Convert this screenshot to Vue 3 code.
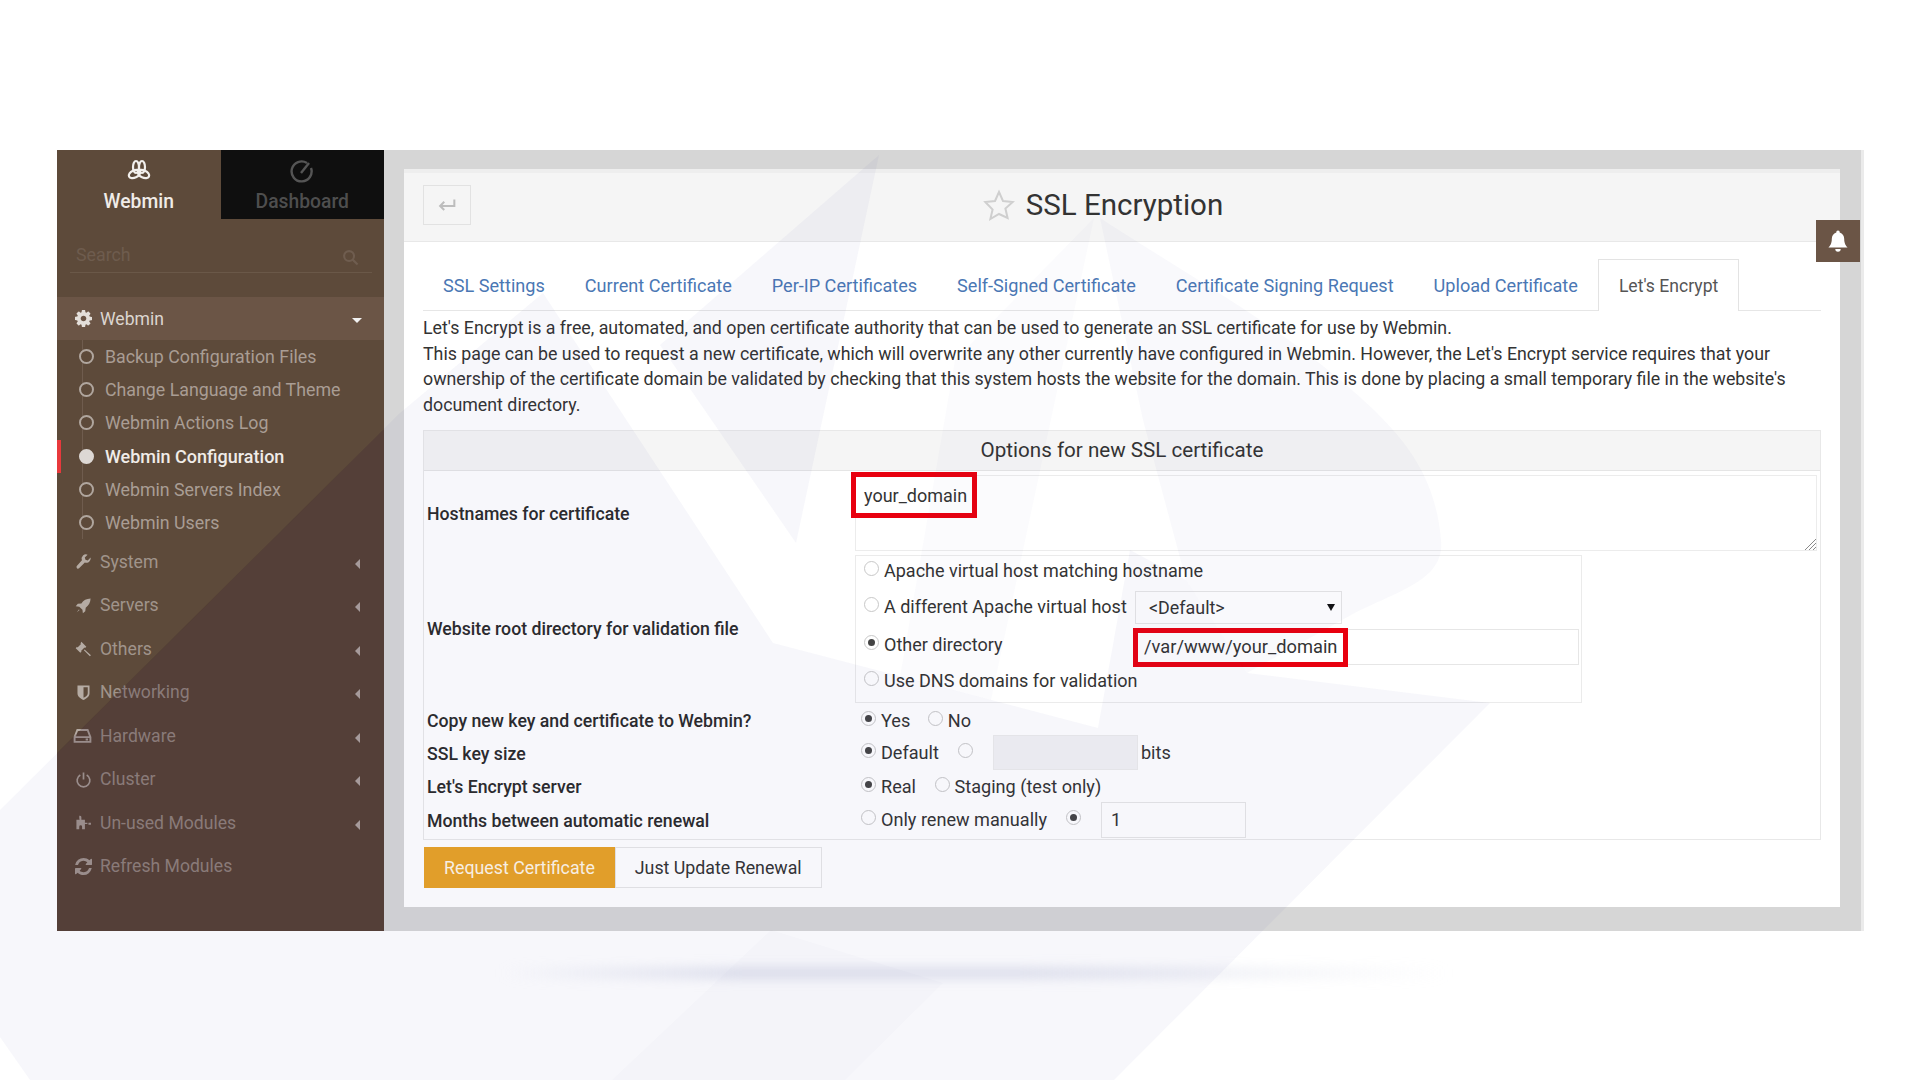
<script setup>
const gear = { vb: '0 0 1536 1536', d: 'M1024 768q0-106-75-181t-181-75-181 75-75 181 75 181 181 75 181-75 75-181zm512-109v222q0 12-8 23t-20 13l-185 28q-19 54-39 91 35 50 107 138 10 12 10 25t-9 23q-27 37-99 108t-94 71q-12 0-26-9l-138-108q-44 23-91 38-16 136-29 186-7 28-36 28h-222q-14 0-24.5-8.5t-11.5-21.5l-28-184q-49-16-90-37l-141 107q-10 9-25 9-14 0-25-11-126-114-165-168-7-10-7-23 0-12 8-23 15-21 51-66.5t54-70.5q-27-50-41-99l-183-27q-13-2-21-12.5t-8-23.5v-222q0-12 8-23t19-13l186-28q14-46 39-92-40-57-107-138-10-12-10-24 0-10 9-23 26-36 98.5-107.5t94.5-71.5q13 0 26 10l138 107q44-23 91-38 16-136 29-186 7-28 36-28h222q14 0 24.5 8.5t11.5 21.5l28 184q49 16 90 37l142-107q9-9 24-9 13 0 25 10 129 119 165 170 7 8 7 22 0 12-8 23-15 21-51 66.5t-54 70.5q26 50 41 98l183 28q13 2 21 12.5t8 23.5z' }
const subItems = [
  { label: 'Backup Configuration Files' },
  { label: 'Change Language and Theme' },
  { label: 'Webmin Actions Log' },
  { label: 'Webmin Configuration', active: true },
  { label: 'Webmin Servers Index' },
  { label: 'Webmin Users' }
]
const navItems = [
  { label: 'System', vb: '0 0 24 24', d: 'M22 6.500l-4 4-3.200-1-1-3.200 4-4a6.200 6.200 0 0 0-8 7.900L2.500 18.500a2.300 2.300 0 0 0 3.200 3.200l8.200-8.200A6.200 6.200 0 0 0 22 6.500z', arrow: true },
  { label: 'Servers', vb: '0 0 24 24', d: 'M22 2c-6 .2-10 2.500-13 7l-5 .6-3 3.400 5 .6 4.500 4.500.6 4.900 3.400-3 .6-5c4.400-3 6.700-7 6.900-12.800zM5.500 17.500L2.500 21.500l4-3z', arrow: true },
  { label: 'Others', vb: '0 0 24 24', d: 'M9 2.500l7 7-1.800 1.800-.8-.8-4.900 4.900.8.800L7.500 18 1 11.500l1.800-1.800.8.800L8.500 5.600l-.8-.8zM13.500 13.500l9 8-1.500 1.500-8.500-8.500z', arrow: true },
  { label: 'Networking', vb: '0 0 24 24', fillRule: 'evenodd', d: 'M3.500 2h17v11c0 4.500-4 7.500-8.500 9.500C7.500 20.500 3.500 17.500 3.500 13zM12 4.500V19.500c3-1.500 6-3.500 6-6.500V4.500z', arrow: true },
  { label: 'Hardware', vb: '0 0 24 24', stroke: true, d: 'M2 14l3.500-9h13L22 14v6H2zM2 14h20M16 17h3', arrow: true, tight: true },
  { label: 'Cluster', vb: '0 0 24 24', stroke: true, d: 'M7.500 5.500a9 9 0 1 0 9 0M12 2v10', arrow: true },
  { label: 'Un-used Modules', vb: '0 0 24 24', d: 'M6 2.500a2.200 2.200 0 0 1 3 2.500L9 8h5v4.500h3.500V14H14v7.500H10V18a2 2 0 0 0-4 0v3.500H2V8h4.500L6 5.500zM19 12.500h3.500V15H19z', arrow: true },
  { label: 'Refresh Modules', vb: '128 128 1536 1536', d: 'M1639 1056q0 5-1 7-64 268-268 434.500t-478 166.500q-146 0-282.500-55t-243.500-157l-129 129q-19 19-45 19t-45-19-19-45v-448q0-26 19-45t45-19h448q26 0 45 19t19 45-19 45l-137 137q71 66 161 102t187 36q134 0 250-65t186-179q11-17 53-117 8-23 30-23h192q13 0 22.500 9.500t9.500 22.500zm25-800v448q0 26-19 45t-45 19h-448q-26 0-45-19t-19-45 19-45l138-138q-148-137-349-137-134 0-250 65t-186 179q-11 17-53 117-8 23-30 23h-199q-13 0-22.500-9.500t-9.500-22.500v-7q65-268 270-434.500t480-166.500q146 0 284 55.500t245 156.500l130-129q19-19 45-19t45 19 19 45z' }
]
const tabs = ['SSL Settings', 'Current Certificate', 'Per-IP Certificates', 'Self-Signed Certificate', 'Certificate Signing Request', 'Upload Certificate']
</script>

<template>
  <div class="page">
    <div class="frame">
      <aside class="sidebar">
        <div class="switch">
          <div class="switch-tab on">
            <svg class="logo" viewBox="0 0 24 24" fill="none" stroke="#f2efec" stroke-width="2.200">
              <ellipse cx="9" cy="8" rx="3" ry="6" />
              <ellipse cx="15" cy="8" rx="3" ry="6" />
              <ellipse cx="7.500" cy="15" rx="6" ry="3.600" transform="rotate(-25 7.500 15)" />
              <ellipse cx="16.500" cy="15" rx="6" ry="3.600" transform="rotate(25 16.500 15)" />
            </svg>
            <span>Webmin</span>
          </div>
          <div class="switch-tab off">
            <svg class="logo" viewBox="0 0 24 24" fill="none" stroke="#555" stroke-width="2.400">
              <path d="M17 4a10 10 0 1 0 4 5" />
              <path d="M11 14l8-10" />
            </svg>
            <span>Dashboard</span>
          </div>
        </div>
        <div class="search">
          <span>Search</span>
          <svg viewBox="0 0 24 24" fill="none" stroke="#6f5d4f" stroke-width="3">
            <circle cx="10" cy="10" r="7" />
            <path d="M15 15l7 7" />
          </svg>
        </div>
        <div class="group-head">
          <svg class="nav-icon" :viewBox="gear.vb"><path :d="gear.d" fill="#e4dfda" /></svg>
          <span class="group-label">Webmin</span>
          <i class="arrow-down"></i>
        </div>
        <ul class="sub-list">
          <li v-for="item in subItems" :key="item.label" class="sub-item" :class="{ active: item.active }">
            <i class="bullet"></i>
            <span>{{ item.label }}</span>
          </li>
        </ul>
        <ul class="nav-list">
          <li v-for="item in navItems" :key="item.label" class="nav-item">
            <svg class="nav-icon" :class="{ wide: item.tight }" :viewBox="item.vb">
              <path v-if="item.stroke" :d="item.d" fill="none" stroke="#b5aba3" stroke-width="2.400" />
              <path v-else :d="item.d" fill="#b5aba3" :fill-rule="item.fillRule" />
            </svg>
            <span class="nav-label">{{ item.label }}</span>
            <i v-if="item.arrow" class="arrow-left"></i>
          </li>
        </ul>
      </aside>

      <main class="main">
        <div class="content">
          <header class="head">
            <div class="back">
              <svg viewBox="0 0 24 24" fill="none" stroke="#bdbdbd" stroke-width="2.200">
                <path d="M20 6v7H5" />
                <path d="M9 8.500L4.500 13 9 17.500" />
              </svg>
            </div>
            <div class="title">
              <svg viewBox="0 0 32 32" fill="none" stroke="#cfcfcf" stroke-width="2">
                <path d="M16 3l4 9 9.700 1-7.300 6.500 2.200 9.500L16 25l-8.600 5 2.200-9.500L2.300 13l9.700-1z" />
              </svg>
              <h1>SSL Encryption</h1>
            </div>
          </header>

          <div class="body">
            <nav class="tabs">
              <a v-for="t in tabs" :key="t" class="tab">{{ t }}</a>
              <a class="tab current">Let's Encrypt</a>
            </nav>
            <p class="intro">
              Let's Encrypt is a free, automated, and open certificate authority that can be used to generate an SSL certificate for use by Webmin.<br />
              This page can be used to request a new certificate, which will overwrite any other currently have configured in Webmin. However, the Let's Encrypt service requires that your<br />
              ownership of the certificate domain be validated by checking that this system hosts the website for the domain. This is done by placing a small temporary file in the website's<br />
              document directory.
            </p>

            <section class="box">
              <div class="box-head">Options for new SSL certificate</div>

              <div class="row r-host">
                <div class="label">Hostnames for certificate</div>
                <div class="value">
                  <div class="textarea">
                    <span class="red host-red"></span>
                    <span class="host-text">your_domain</span>
                    <svg class="grip" viewBox="0 0 12 12" stroke="#8a8a8a" stroke-width="1">
                      <path d="M12 1L1 12M12 5L5 12M12 9L9 12" />
                    </svg>
                  </div>
                </div>
              </div>

              <div class="row r-site">
                <div class="label">Website root directory for validation file</div>
                <div class="value">
                  <div class="inner">
                    <div class="inner-row ir1"><i class="radio"></i><span>Apache virtual host matching hostname</span></div>
                    <div class="inner-row ir2">
                      <i class="radio"></i><span class="opt-wide">A different Apache virtual host</span>
                      <div class="select"><span>&lt;Default&gt;</span><i class="caret"></i></div>
                    </div>
                    <div class="inner-row ir3">
                      <i class="radio on"></i><span class="opt-wide">Other directory</span>
                      <div class="path-input"><span class="red path-red"></span><span>/var/www/your_domain</span></div>
                    </div>
                    <div class="inner-row ir4"><i class="radio"></i><span>Use DNS domains for validation</span></div>
                  </div>
                </div>
              </div>

              <div class="row r-copy">
                <div class="label">Copy new key and certificate to Webmin?</div>
                <div class="value opts">
                  <i class="radio on"></i><span class="o-yes">Yes</span>
                  <i class="radio"></i><span>No</span>
                </div>
              </div>
              <div class="row r-size">
                <div class="label">SSL key size</div>
                <div class="value opts">
                  <i class="radio on"></i><span class="o-def">Default</span>
                  <i class="radio"></i>
                  <div class="bits-input"></div><span>bits</span>
                </div>
              </div>
              <div class="row r-server">
                <div class="label">Let's Encrypt server</div>
                <div class="value opts">
                  <i class="radio on"></i><span class="o-real">Real</span>
                  <i class="radio"></i><span>Staging (test only)</span>
                </div>
              </div>
              <div class="row r-months">
                <div class="label">Months between automatic renewal</div>
                <div class="value opts">
                  <i class="radio"></i><span class="o-only">Only renew manually</span>
                  <i class="radio on"></i>
                  <div class="num-input">1</div>
                </div>
              </div>
            </section>

            <div class="actions">
              <button class="btn primary">Request Certificate</button>
              <button class="btn">Just Update Renewal</button>
            </div>
          </div>
        </div>
        <div class="bell">
          <svg viewBox="0 0 24 24" fill="#fff">
            <path d="M12 1.500a1.700 1.700 0 0 0-1.700 1.900C7.400 4.200 5.800 6.800 5.800 10c0 4.800-1.800 6.800-3.300 8.500h19c-1.500-1.700-3.300-3.700-3.300-8.500 0-3.200-1.600-5.800-4.500-6.600A1.700 1.700 0 0 0 12 1.500zM9.300 20a2.700 2.700 0 0 0 5.400 0z" />
          </svg>
        </div>
      </main>
    </div>

    <div class="ground-shadow"></div>

    <svg class="watermark" viewBox="0 0 1920 1080">
      <g fill="#46469a" fill-opacity="0.045">
        <path d="M0 810L400 413L543 293L773 643L1098 728L1130 550L1186 580L1247 673L1490 703L1114 1080H30L0 1037z" />
        <path d="M879 155L660 345L796 543z" />
        <path d="M1094 218L955 360L900 677L991 700z" fill-opacity="0.025" />
        <path d="M1100 218L1143 420L1186 580L1247 673L1351 615C1400 590 1445 580 1441 540C1435 470 1400 430 1340 380C1270 320 1180 270 1100 218z" fill-opacity="0.03" />
        <path d="M771 930L612 1080H845L943 983z" fill-opacity="0.015" />
      </g>
      <path d="M57 753L383 430H384V931H57z" fill="#2d0a19" fill-opacity="0.16" />
    </svg>
  </div>
</template>

<style scoped>
.page {
  position: relative;
  width: 1920px;
  height: 1080px;
  overflow: hidden;
  background: #fff;
  padding: 150px 56px 0 57px;
  box-sizing: border-box;
  font-family: Roboto, "Liberation Sans", sans-serif;
  font-size: 17.8px;
  color: #333;
}
.frame { display: flex; height: 781px; }

.sidebar { width: 327px; flex: none; background: #5d4a3a; display: flex; flex-direction: column; }
.switch { display: flex; height: 69px; }
.switch-tab { flex: 1; display: flex; flex-direction: column; align-items: center; font-weight: 500; font-size: 19.3px; padding-top: 9px; box-sizing: border-box; }
.switch-tab.on { color: #f0ece8; }
.switch-tab.off { background: #0f0f0f; color: #4e4e4e; }
.logo { width: 24px; height: 24px; margin-bottom: 7px; }
.search { height: 54px; margin: 0 12px 0 13px; padding: 18px 13px 0 6px; box-sizing: border-box; border-bottom: 1px solid #6a5848; color: #6e5c4e; display: flex; justify-content: space-between; align-items: center; font-size: 17.8px; }
.search svg { width: 17px; height: 17px; margin-top: 6px; }
.group-head { margin-top: 24px; height: 43px; background: #6b5546; display: flex; align-items: center; padding-left: 18px; color: #dcd6d0; position: relative; font-size: 17.6px; }
.nav-icon { width: 17px; height: 17px; flex: none; }
.nav-icon.wide { width: 19px; height: 19px; margin-left: -2px; }
.group-label { margin-left: 8px; }
.arrow-down { margin-left: auto; margin-right: 22px; width: 0; height: 0; border-left: 5px solid transparent; border-right: 5px solid transparent; border-top: 5px solid #f2f2f2; position: relative; top: 2px; }
.sub-list, .nav-list { list-style: none; margin: 0; padding: 0; }
.sub-list { position: relative; }
.sub-list::before { content: ""; position: absolute; left: 25px; top: 0; bottom: 0; width: 1px; background: #6f5c4e; }
.sub-item { position: relative; height: 33.2px; display: flex; align-items: center; padding-left: 22px; color: #a99d94; font-size: 17.8px; }
.sub-item.active { color: #f0ece8; font-weight: 500; font-size: 18px; }
.sub-item.active::before { content: ""; position: absolute; left: 0; top: 0; bottom: 0; width: 4px; background: #e8393c; }
.bullet { width: 15px; height: 15px; border: 2px solid #b0a69e; border-radius: 50%; box-sizing: border-box; margin-right: 11px; position: relative; background: #5d4a3a; }
.active .bullet { background: #ddd8d4; border-color: #ddd8d4; }
.nav-list { padding-top: 1px; }
.nav-item { height: 43.5px; display: flex; align-items: center; padding-left: 18px; color: #a0948b; font-size: 17.6px; }
.nav-label { margin-left: 8px; }
.arrow-left { margin-left: auto; margin-right: 24px; width: 0; height: 0; border-top: 5px solid transparent; border-bottom: 5px solid transparent; border-right: 5px solid #c4bcb5; position: relative; top: 2px; }

.main { position: relative; flex: 1; background: #d6d6d6; border-right: 3px solid #ebebeb; padding: 19px 21px 24px 20px; display: flex; }
.content { flex: 1; background: #fff; display: flex; flex-direction: column; border-top: 4px solid #eeeeee; }
.head { height: 69px; flex: none; background: #f5f5f5; border-bottom: 1px solid #e8e8e8; display: flex; align-items: center; padding: 0 0 4px 19px; box-sizing: border-box; }
.back { width: 48px; height: 40px; border: 1px solid #e2e2e2; box-sizing: border-box; display: flex; align-items: center; justify-content: center; }
.back svg { width: 22px; height: 22px; }
.title { flex: 1; display: flex; align-items: center; justify-content: center; padding-right: 105px; gap: 11px; }
.title svg { width: 32px; height: 34px; }
.title h1 { margin: 0; font-weight: 400; font-size: 29.5px; color: #333; }

.body { padding: 17px 19px 0; }
.tabs { display: flex; height: 52px; border-bottom: 1px solid #e6e6e6; box-sizing: border-box; }
.tab { padding: 1px 20px 0; display: flex; align-items: center; color: #4a77b4; font-size: 18.1px; }
.tab.current { color: #555; background: #fff; border: 1px solid #e3e3e3; border-bottom: none; margin-bottom: -1px; font-size: 17.6px; }
.intro { margin: 4px 0 0; line-height: 25.6px; color: #333; }

.box { margin-top: 13px; border: 1px solid #e8e8e8; height: 410px; box-sizing: border-box; }
.box-head { height: 40px; background: #f5f5f5; border-bottom: 1px solid #e5e5e5; display: flex; align-items: center; justify-content: center; font-size: 20.6px; color: #333; box-sizing: border-box; padding-bottom: 2px; }
.row { display: flex; align-items: center; }
.r-host { height: 82px; }
.r-site { height: 151px; }
.r-copy { height: 33px; }
.r-size { height: 33px; }
.r-server { height: 34px; }
.r-months { height: 34px; }
.label { width: 431px; flex: none; padding-left: 3px; box-sizing: border-box; font-weight: 500; font-size: 17.7px; color: #2a2a2a; }
.r-host .label { padding-top: 4px; }
.value { flex: 1; min-width: 0; }
.r-size .value { padding-bottom: 2px; }
.r-server .value { padding-bottom: 1px; }
.r-months .value { padding-bottom: 3px; }

.textarea { position: relative; margin: 1px 3px 0 0; height: 76px; border: 1px solid #ececec; box-sizing: border-box; padding: 7px 6px; font-size: 18px; }
.host-text { line-height: 26px; margin-left: 2px; }
.grip { position: absolute; right: 0; bottom: 0; width: 12px; height: 12px; }
.red { position: absolute; border: 5px solid #e8000f; box-sizing: border-box; }
.host-red { left: -5px; top: -4px; width: 126px; height: 46px; }

.inner { width: 727px; height: 148px; border: 1px solid #ebebeb; box-sizing: border-box; display: flex; flex-direction: column; font-size: 18px; }
.inner-row { display: flex; align-items: center; padding-left: 8px; }
.ir1 { height: 30px; }
.ir2 { height: 41px; }
.ir3 { height: 36px; }
.ir4 { height: 36px; }
.radio { width: 15px; height: 15px; flex: none; border: 1px solid #c8c8c8; border-radius: 50%; box-sizing: border-box; background: #fff; margin-right: 5px; position: relative; top: -2px; display: block; }
.radio.on::after { content: ""; position: absolute; inset: 3px; border-radius: 50%; background: #444; }
.opt-wide { width: 251px; flex: none; }
.select { width: 207px; height: 33px; border: 1px solid #e6e6e6; box-sizing: border-box; display: flex; align-items: center; justify-content: space-between; padding: 0 6px 0 13px; font-size: 17.9px; position: relative; top: 1px; }
.caret { width: 0; height: 0; border-left: 4px solid transparent; border-right: 4px solid transparent; border-top: 7px solid #111; }
.path-input { position: relative; flex: 1; height: 36px; border: 1px solid #e6e6e6; box-sizing: border-box; display: flex; align-items: center; padding-left: 8px; margin-right: 2px; font-size: 18.3px; top: 2px; }
.path-red { left: -3px; top: -2px; width: 215px; height: 39px; }

.opts { display: flex; align-items: center; padding-left: 6px; font-size: 18.1px; }
.o-yes { margin-right: 17.500px; }
.o-def { margin-right: 19px; }
.o-real { margin-right: 18.500px; }
.o-only { margin-right: 19px; }
.bits-input { width: 145px; height: 35px; background: #f2f2f4; border: 1px solid #ececec; box-sizing: border-box; margin: 0 3px 0 15px; }
.num-input { width: 145px; height: 36px; border: 1px solid #e6e6e6; box-sizing: border-box; display: flex; align-items: center; padding-left: 9px; margin-left: 15px; }

.actions { display: flex; margin-top: 7px; margin-left: 1px; }
.btn { height: 41px; border: 1px solid #e6e6e6; background: #fff; font: inherit; font-size: 17.8px; color: #333; padding: 0 19px; box-sizing: border-box; }
.btn.primary { background: #e9a225; border-color: #e9a225; color: #fff6e6; }

.bell { position: absolute; right: 1px; top: 70px; width: 44px; height: 42px; background: #6b5546; display: flex; align-items: center; justify-content: center; }
.bell svg { width: 24px; height: 24px; }

.ground-shadow { position: absolute; left: 500px; top: 968px; width: 950px; height: 10px; background: linear-gradient(90deg, rgba(215,218,232,0), rgba(215,218,232,.8) 25%, rgba(215,218,232,.8) 55%, rgba(215,218,232,0)); filter: blur(6px); }
.watermark { position: absolute; left: 0; top: 0; width: 1920px; height: 1080px; pointer-events: none; }
</style>
